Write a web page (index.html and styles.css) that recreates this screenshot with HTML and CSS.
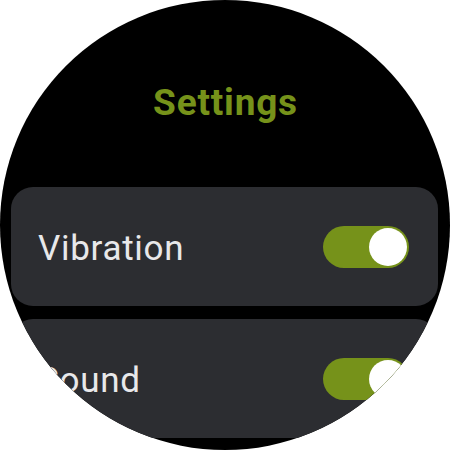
FILE: index.html
```html
<!DOCTYPE html>
<html>
<head>
<meta charset="utf-8">
<link rel="stylesheet" href="styles.css">
</head>
<body>
<div class="watch">
  <h1 class="title">Settings</h1>
  <div class="list">
    <div class="card">
      <span class="label">Vibration</span>
      <div class="toggle on"><div class="knob"></div></div>
    </div>
    <div class="card">
      <span class="label">Sound</span>
      <div class="toggle on"><div class="knob"></div></div>
    </div>
  </div>
</div>
</body>
</html>
```
FILE: styles.css
```css
html, body {
  margin: 0;
  padding: 0;
  background: #ffffff;
}
.watch {
  width: 450px;
  height: 450px;
  border-radius: 50%;
  background: #000000;
  overflow: hidden;
  display: flex;
  flex-direction: column;
  font-family: Roboto, "Noto Sans", sans-serif;
}
.title {
  margin: 0;
  padding-top: 81px;
  text-align: center;
  font-size: 37px;
  line-height: 43px;
  font-weight: 700;
  color: #76921a;
  letter-spacing: 0.8px;
  text-indent: 1px;
}
.list {
  display: flex;
  flex-direction: column;
  gap: 13px;
  padding-left: 11px;
  padding-top: 63px;
}
.card {
  width: 427px;
  height: 119px;
  box-sizing: border-box;
  background: #2c2d31;
  border-radius: 22px;
  display: flex;
  align-items: center;
  justify-content: space-between;
  padding: 0 29px 0 27px;
}
.label {
  font-size: 35px;
  line-height: 41px;
  padding-top: 3px;
  color: #e8e8ea;
  letter-spacing: 0.7px;
}
.toggle {
  width: 86px;
  height: 42px;
  border-radius: 21px;
  background: #76921a;
  display: flex;
  align-items: center;
  justify-content: flex-end;
  padding: 0 2px;
  box-sizing: border-box;
}
.knob {
  width: 38px;
  height: 38px;
  border-radius: 50%;
  background: #ffffff;
}
```
